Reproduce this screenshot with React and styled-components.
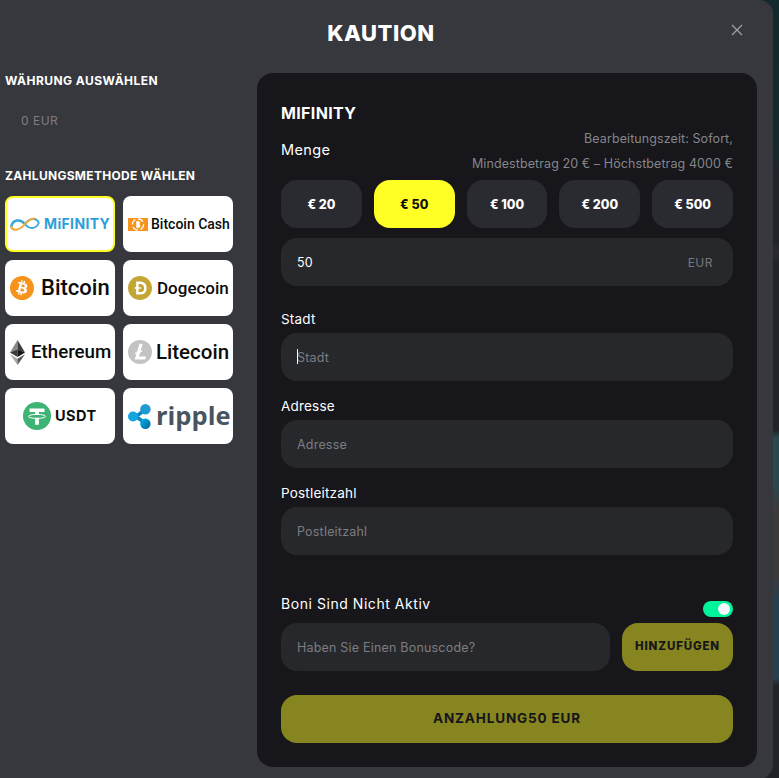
import React from "react";
import styled, { createGlobalStyle } from "styled-components";
import { SiBitcoin, SiDogecoin, SiLitecoin } from "react-icons/si";

const Global = createGlobalStyle`
  html, body { margin: 0; padding: 0; background: #1f2127; }
  * { box-sizing: border-box; }
  body { font-family: Inter, "Open Sans", "Liberation Sans", sans-serif; }
`;
const Page = styled.div`
  width: 779px; height: 778px; overflow: hidden; display: flex;
  background: linear-gradient(180deg, #14292d 0, #17292d 150px, #212329 175px, #212329 240px, #2b2b30 252px, #212329 265px, #212329 430px, #2a4850 438px, #2a4850 485px, #3d3a3a 510px, #3d3a3a 575px, #27404f 600px, #27404f 678px, #212329 686px);
`;
const Modal = styled.div`
  width: 773px; height: 780px; background: #36383d; border-radius: 0 14px 16px 0; flex: none;
  position: relative;
`;
const Header = styled.header`
  height: 66px; padding-right: 11px; display: flex; align-items: center; justify-content: center;
`;
const Title = styled.h1`
  margin: 0; color: #fff; font-size: 22px; font-weight: 800; letter-spacing: 0.5px; line-height: 26px;
`;
const Close = styled.button`
  position: absolute; top: 24px; right: 30px; width: 12px; height: 12px; padding: 0; border: 0; background: none; display: block;
`;
const Body = styled.div`
  display: flex; padding: 7px 0 0 5px; gap: 24px;
`;
const Side = styled.aside`
  width: 228px; flex: none;
`;
const SideHeading = styled.h2`
  margin: ${p => p.$top}px 0 0; color: #fff; font-size: 12px; font-weight: 700; line-height: 16px; letter-spacing: ${p => p.$ls}px; white-space: nowrap;
`;
const Balance = styled.div`
  margin-top: 24px; padding-left: 16px; color: #7c7d82; font-size: 12px; line-height: 16px; letter-spacing: 0.5px;
`;
const CardGrid = styled.div`
  margin-top: 12px; display: grid; grid-template-columns: 110px 110px; grid-auto-rows: 56px; gap: 8px;
`;
const Card = styled.div`
  background: #fff; border-radius: 8px; display: flex; align-items: center;
  padding-left: ${p => p.$pl ?? 5}px; gap: ${p => p.$gap ?? 6}px; border: ${p => p.$active ? "2px solid #ffff26" : "0"};
  overflow: hidden; color: #0c0c0c; white-space: nowrap;
  & > svg { flex: none; }
`;
const LogoText = styled.span`
  font-size: ${p => p.$size}px; letter-spacing: ${p => p.$ls ?? 0}px; color: ${p => p.$color ?? "#0c0c0c"};
  font-weight: ${p => p.$weight ?? 500}; font-family: ${p => p.$font ?? "Roboto"}, sans-serif; line-height: 1;
`;
const Panel = styled.main`
  width: 500px; height: 694px; flex: none; background: #16161b; border-radius: 16px; padding: 30px 24px 24px; display: flex; flex-direction: column;
`;
const PanelTitle = styled.h2`
  margin: 0; color: #fff; font-size: 16px; font-weight: 700; line-height: 20px; letter-spacing: 0.35px;
`;
const AmountHead = styled.div`
  margin-top: 3px; height: 50px; display: flex; align-items: center; justify-content: space-between;
`;
const Label = styled.label`
  display: block; color: #fff; font-size: 13.5px; line-height: 18px; letter-spacing: 0.2px;
`;
const AmountLabel = styled(Label)`
  font-size: 14.5px; letter-spacing: 0.4px; margin-bottom: 2px;
`;
const Info = styled.div`
  text-align: right; color: #85868b; font-size: 12.5px; line-height: 25px; letter-spacing: 0.09px; white-space: nowrap;
`;
const Presets = styled.div`
  margin-top: 4px; display: grid; grid-template-columns: repeat(5, 1fr); gap: 12px;
`;
const Preset = styled.button`
  height: 48px; border: 0; border-radius: 16px; font: 800 12.5px Inter, sans-serif; padding: 0;
  background: ${p => p.$active ? "#ffff26" : "#2a2b30"}; color: ${p => p.$active ? "#111" : "#fff"};
`;
const FieldBox = styled.div`
  position: relative; height: 48px; border-radius: 16px; background: #27282b; display: flex; align-items: center; justify-content: space-between;
  padding: 0 20px 0 16px; flex: ${p => p.$grow ? 1 : "none"};
  margin-top: ${p => p.$top ?? 0}px;
`;
const Input = styled.input`
  width: 100%; border: 0; outline: 0; background: none; padding: 0; color: #fff; font: 400 12.5px Inter, sans-serif; letter-spacing: 0.2px;
  &::placeholder { color: #7c7d81; opacity: 1; }
`;
const Unit = styled.span`
  color: #77787c; font-size: 12px; letter-spacing: 0.5px;
`;
const Caret = styled.span`
  position: absolute; left: 16px; top: 16px; width: 1px; height: 15px; background: #fff;
`;
const Group = styled.div`
  margin-top: ${p => p.$top}px;
  & > label { margin-bottom: 5px; }
`;
const BonusHead = styled.div`
  margin-top: 39px; height: 23px; margin-bottom: 6px; display: flex; justify-content: space-between;
`;
const BonusLabel = styled.span`
  color: #fff; font-size: 14px; line-height: 20px; letter-spacing: 0.55px;
`;
const Toggle = styled.span`
  align-self: flex-end; width: 30px; height: 16px; border-radius: 8px; background: #00f59b; display: flex; justify-content: flex-end; align-items: center; padding-right: 3px;
  &::after { content: ""; width: 12px; height: 12px; border-radius: 50%; background: #f4f6fb; }
`;
const BonusRow = styled.div`
  display: flex; gap: 12px;
`;
const AddButton = styled.button`
  width: 111px; height: 48px; border: 0; border-radius: 16px; background: #878520; color: #15151a; font: 800 11.5px Inter, sans-serif; letter-spacing: 0.85px; padding: 0 0 2px;
`;
const Submit = styled.button`
  margin-top: 24px; width: 100%; height: 48px; border: 0; border-radius: 16px; background: #878520; color: #15151a; font: 700 13.5px Inter, sans-serif; letter-spacing: 0.85px; padding: 0 0 2px;
`;

const Mifinity = () => (
  <svg width="30" height="16" viewBox="0 0 30 16" fill="none">
    <path d="M1.2 10.5C3 3.5 10 2.5 15 8" stroke="#35a7dc" strokeWidth="2.6" strokeLinecap="round" />
    <path d="M15 8C19 13.5 26 13.5 28.8 7C27 1.5 20 1.5 15 8" stroke="#35a7dc" strokeWidth="1.8" strokeLinecap="round" />
    <path d="M1.2 10.5C2 15 9 15.5 15 8" stroke="#f5a838" strokeWidth="2" strokeLinecap="round" />
    <path d="M15 8C18 4.5 20 3 24 2.6" stroke="#f5a838" strokeWidth="2" strokeLinecap="round" />
  </svg>
);
const BitcoinCash = () => (
  <svg width="20" height="13" viewBox="0 0 20 13">
    <rect width="20" height="13" fill="#f7941d" />
    <circle cx="10" cy="6.5" r="5.6" fill="none" stroke="#fff" strokeWidth="1.2" strokeDasharray="6 2.5" />
    <path d="M8.5 3.5h2.2c1.5 0 1.5 2.7 0 2.8 1.8 0 1.8 3.2 0 3.2H8.5zM9.6 2.6v1M9.6 9.4v1" fill="#fff" stroke="#fff" strokeWidth=".6" />
  </svg>
);
const Ethereum = () => (
  <svg width="15" height="25" viewBox="0 0 15 25">
    <path d="M7.5 0L0 12.6l7.5-3.3z" fill="#8a8a8a" />
    <path d="M7.5 0L15 12.6 7.5 9.3z" fill="#3c3c3b" />
    <path d="M0 12.6l7.5 4.4V9.3z" fill="#3c3c3b" />
    <path d="M15 12.6L7.5 17V9.3z" fill="#141414" />
    <path d="M0 14.2L7.5 25v-6.3z" fill="#a8a8a8" />
    <path d="M15 14.2L7.5 25v-6.3z" fill="#555" />
  </svg>
);
const Tether = () => (
  <svg width="28" height="28" viewBox="0 0 28 28">
    <circle cx="14" cy="14" r="14" fill="#3db374" />
    <path d="M6.5 6.5h15v3.4h-5.6v3.2h-3.8V9.9H6.5zM12.1 15.8h3.8v7h-3.8z" fill="#fff" />
    <ellipse cx="14" cy="14.4" rx="8.6" ry="2" fill="none" stroke="#fff" strokeWidth="1" />
  </svg>
);
const Ripple = () => (
  <svg width="23" height="25" viewBox="0 0 23 25">
    <defs>
      <linearGradient id="rp" x1="0" y1="0" x2="1" y2="1">
        <stop offset="0" stopColor="#00b4ea" />
        <stop offset="1" stopColor="#00629b" />
      </linearGradient>
    </defs>
    <g stroke="#0b86c0" strokeWidth="3.4" fill="none">
      <path d="M5 12.5C10 12.5 13 9 17 5M5 12.5C10 12.5 13 16 17 20" />
    </g>
    <circle cx="17.4" cy="5.2" r="5.2" fill="#1f9bd4" />
    <circle cx="5" cy="12.5" r="5" fill="#12a6e0" />
    <circle cx="17.4" cy="19.8" r="5.2" fill="url(#rp)" />
  </svg>
);

const amounts = [20, 50, 100, 200, 500];

export default function App() {
  return (
    <Page>
      <Global />
      <Modal>
        <Header>
          <Title>KAUTION</Title>
        </Header>
        <Close aria-label="close">
          <svg width="12" height="12" viewBox="0 0 12 12" stroke="#a2a3a6" strokeWidth="1.2"><path d="M1 1l10 10M11 1L1 11" /></svg>
        </Close>
        <Body>
          <Side>
            <SideHeading $top={0} $ls={0.46}>WÄHRUNG AUSWÄHLEN</SideHeading>
            <Balance>0 EUR</Balance>
            <SideHeading $top={39} $ls={0.3}>ZAHLUNGSMETHODE WÄHLEN</SideHeading>
            <CardGrid>
              <Card $active $pl={3} $gap={4}><Mifinity /><LogoText $size={14} $weight={700} $color="#2c9fd8" $font="Inter" $ls={0.35}>MiFINITY</LogoText></Card>
              <Card $gap={3}><BitcoinCash /><LogoText $size={14}>Bitcoin Cash</LogoText></Card>
              <Card $gap={7}><SiBitcoin size={24} color="#f7931a" /><LogoText $size={22}>Bitcoin</LogoText></Card>
              <Card $gap={5}><SiDogecoin size={24} color="#c3a634" /><LogoText $size={17}>Dogecoin</LogoText></Card>
              <Card $gap={6}><Ethereum /><LogoText $size={18.7}>Ethereum</LogoText></Card>
              <Card $gap={4}><SiLitecoin size={24} color="#c4c2c2" /><LogoText $size={20.5}>Litecoin</LogoText></Card>
              <Card $pl={18} $gap={4}><Tether /><LogoText $size={14.5} $weight={700} $font="Inter" $ls={0.5}>USDT</LogoText></Card>
              <Card $gap={5}><Ripple /><LogoText $size={25.5} $weight={700} $font="Open Sans" $color="#48545f">ripple</LogoText></Card>
            </CardGrid>
          </Side>
          <Panel>
            <PanelTitle>MIFINITY</PanelTitle>
            <AmountHead>
              <AmountLabel>Menge</AmountLabel>
              <Info>Bearbeitungszeit: Sofort,<br />Mindestbetrag 20 € – Höchstbetrag 4000 €</Info>
            </AmountHead>
            <Presets>
              {amounts.map(a => <Preset key={a} $active={a === 50}>€ {a}</Preset>)}
            </Presets>
            <FieldBox $top={10}>
              <Input defaultValue="50" />
              <Unit>EUR</Unit>
            </FieldBox>
            <Group $top={24}>
              <Label>Stadt</Label>
              <FieldBox><Input placeholder="Stadt" /><Caret /></FieldBox>
            </Group>
            <Group $top={16}>
              <Label>Adresse</Label>
              <FieldBox><Input placeholder="Adresse" /></FieldBox>
            </Group>
            <Group $top={16}>
              <Label>Postleitzahl</Label>
              <FieldBox><Input placeholder="Postleitzahl" /></FieldBox>
            </Group>
            <BonusHead>
              <BonusLabel>Boni Sind Nicht Aktiv</BonusLabel>
              <Toggle />
            </BonusHead>
            <BonusRow>
              <FieldBox $grow><Input placeholder="Haben Sie Einen Bonuscode?" /></FieldBox>
              <AddButton>HINZUFÜGEN</AddButton>
            </BonusRow>
            <Submit>ANZAHLUNG50 EUR</Submit>
          </Panel>
        </Body>
      </Modal>
    </Page>
  );
}
